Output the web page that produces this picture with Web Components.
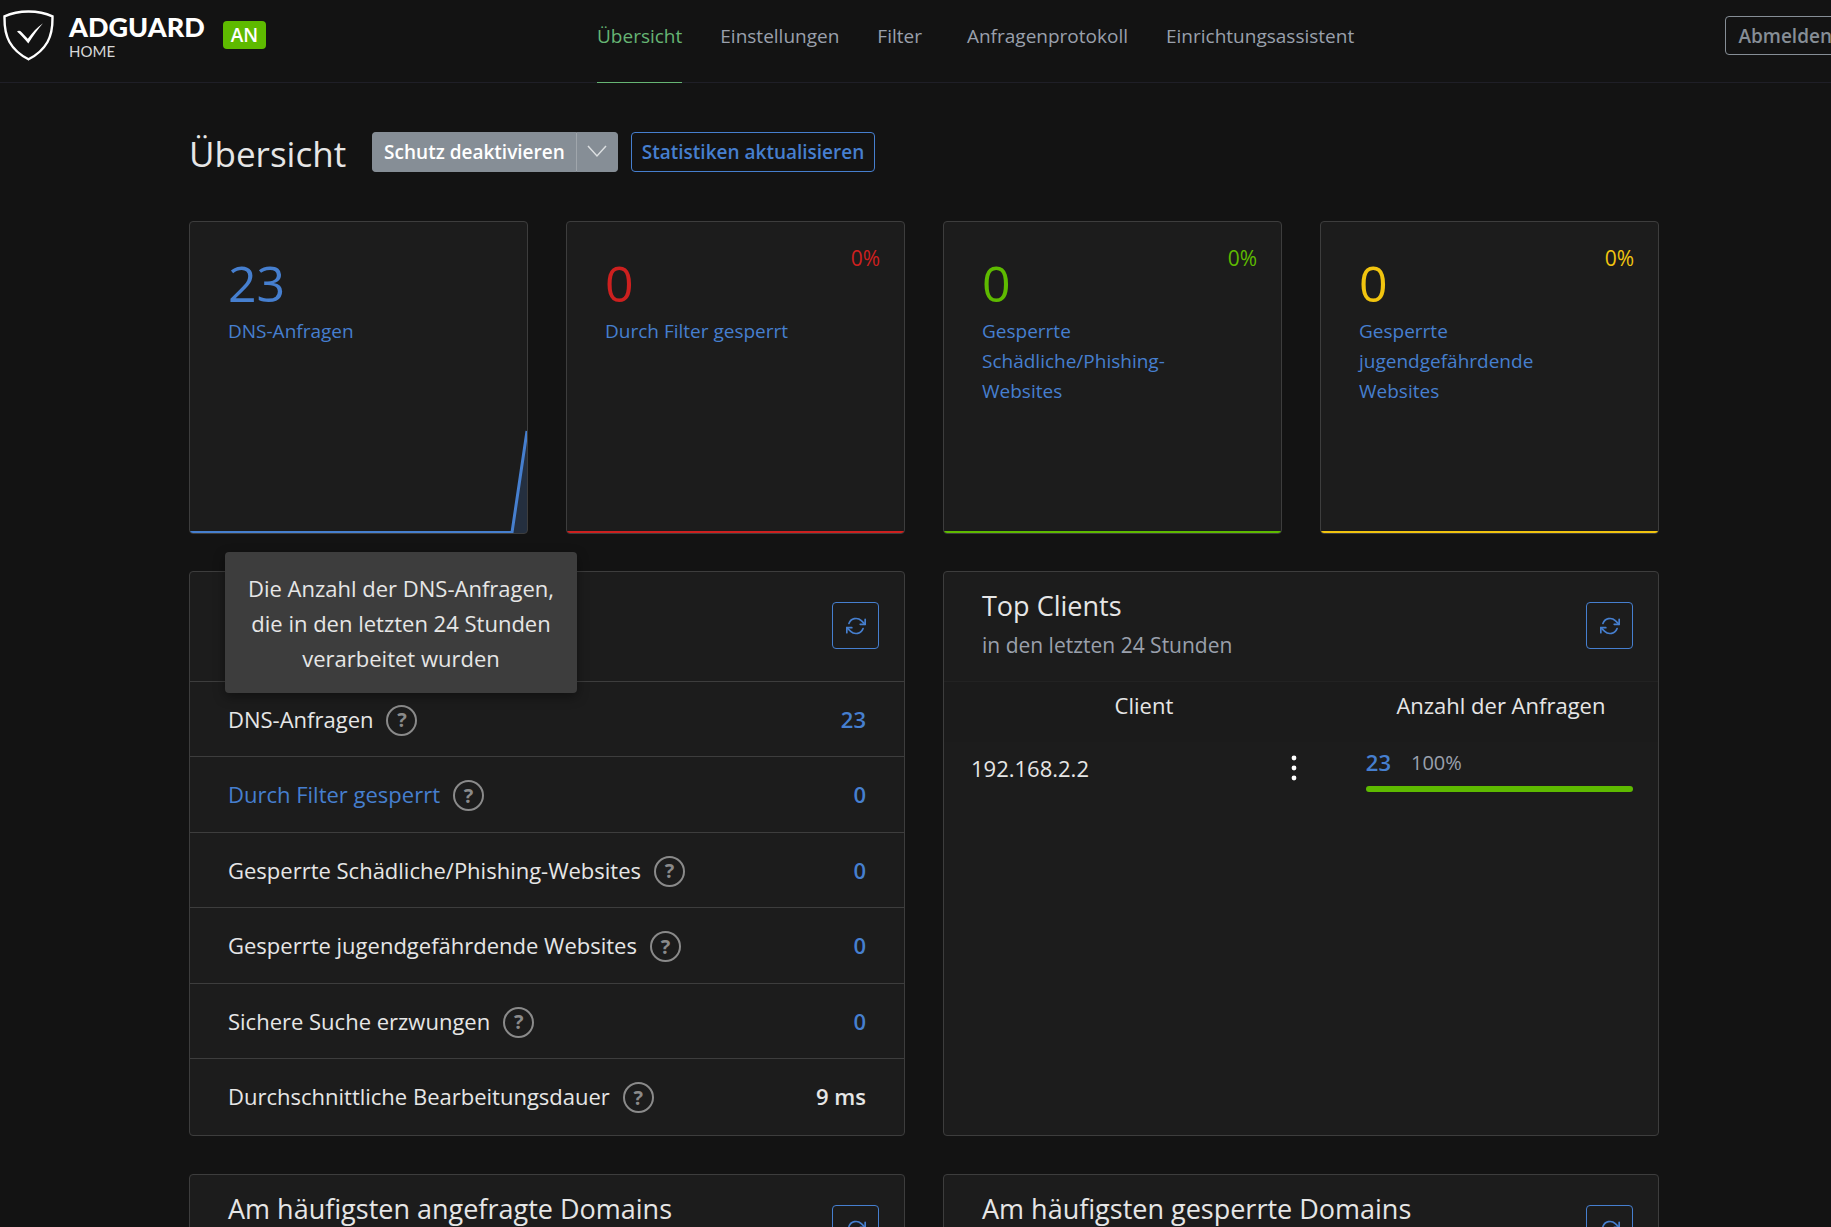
<!DOCTYPE html>
<html lang="de">
<head>
<meta charset="utf-8">
<title>AdGuard Home</title>
<style>
	:root {
		--bg: #131313;
		--card: #1c1c1c;
		--line: #3d3d3d;
		--text: #e6e6e6;
		--muted: #9aa0ac;
		--gray: #868e96;
		--blue: #467fcf;
		--red: #cd201f;
		--green: #5eba00;
		--yellow: #f1c40f;
	}
	html {
		overflow: hidden;
		background: var(--bg);
	}
	body {
		margin: 0;
		/* the header row is a scrollbar wider than the window */
		width: calc(100% + 17px);
		color: var(--text);
		font: 22px/35px "Open Sans", "Noto Sans", sans-serif;
	}
</style>
</head>
<body>
<doon-header></doon-header>
<doon-dashboard></doon-dashboard>

<script>
const BASE = `
	:host, *, *::before, *::after { box-sizing: border-box; }
	a { color: var(--blue); text-decoration: none; }
	button { margin: 0; font: inherit; cursor: pointer; }
`;

function createTemplate(html) {
	const template = document.createElement("template");
	template.innerHTML = html;
	return template;
}

class BaseElement extends HTMLElement {
	constructor(template) {
		super();
		this._shadow = this.attachShadow({ mode: "open" });
		this._shadow.appendChild(template.content.cloneNode(true));
	}
}

////////////////////////////////////////////// Header //////////////////////////////////////////////

const headerTemplate = createTemplate(`
<style>
	${BASE}
	:host {
		display: grid;
		grid-template-columns: minmax(280px, 597px) 1fr auto;
		height: 83px;
		padding-right: 3px;
		border-bottom: 1px solid #1f1f27;
	}
	.brand {
		display: flex;
		align-items: flex-start;
		padding: 10px 0 0 3px;
	}
	.brand svg { display: block; margin-right: 15px; }
	.name {
		display: flex;
		flex-direction: column;
		font-family: Lato, sans-serif;
		color: #fff;
	}
	.name b { font-size: 27px; line-height: 34px; font-weight: 900; }
	.name span { font-size: 15px; line-height: 14px; color: #d8d8d8; }
	.badge {
		margin: 11px 0 0 18px;
		padding: 0 8px;
		border-radius: 4px;
		background: var(--green);
		color: #fff;
		font-size: 19px;
		font-weight: 600;
		line-height: 28px;
	}
	nav { display: flex; gap: 38px; font-size: 19px; }
	/* room for the submenu caret */
	.has-menu { margin-right: 7px; }
	.logout {
		align-self: start;
		margin-top: 16px;
		height: 39px;
		padding: 0 12px;
		border: 1px solid var(--gray);
		border-radius: 4px;
		background: none;
		color: var(--gray);
		font-size: 19px;
		font-weight: 600;
		line-height: 36px;
	}
</style>
<div class="brand">
	<svg width="51" height="51" viewBox="0 0 51 51" fill="none">
		<path d="M25.500 1.500C17.500 1.500 8.500 3.100 1.500 6.300C1.500 12 0.900 22 6.500 32C11 40 18 45.500 25.500 49.300C33 45.500 40 40 44.500 32C50.100 22 49.500 12 49.500 6.300C42.500 3.100 33.500 1.500 25.500 1.500Z" stroke="#fff" stroke-width="2.400"/>
		<path d="M14 21.500C15.500 20.300 17.200 20.600 18.400 22L24.800 28.800C29.500 22.500 34.300 17 40 13.200C35 19 30 26 25.300 33.500C21.700 29.200 18 25 14 21.500Z" fill="#fff"/>
	</svg>
	<div class="name"><b>ADGUARD</b><span>HOME</span></div>
	<span class="badge">AN</span>
</div>
<nav>
	<doon-nav-link href="#" active>Übersicht</doon-nav-link>
	<doon-nav-link href="#settings">Einstellungen</doon-nav-link>
	<doon-nav-link href="#filters" class="has-menu">Filter</doon-nav-link>
	<doon-nav-link href="#logs">Anfragenprotokoll</doon-nav-link>
	<doon-nav-link href="#guide">Einrichtungsassistent</doon-nav-link>
</nav>
<button class="logout">Abmelden</button>
`);

customElements.define("doon-header", class extends BaseElement {
	constructor() { super(headerTemplate); }
});

const navLinkTemplate = createTemplate(`
<style>
	${BASE}
	:host { display: block; height: 83px; }
	a {
		display: block;
		height: 83px;
		padding-top: 19px;
		border-bottom: 1px solid transparent;
		color: var(--muted);
	}
	:host([active]) a { color: #66b574; border-color: #66b574; }
</style>
<a><slot></slot></a>
`);

customElements.define("doon-nav-link", class extends BaseElement {
	constructor() { super(navLinkTemplate); }

	connectedCallback() {
		this._shadow.querySelector("a").href = this.getAttribute("href");
	}
});

///////////////////////////////////////////// Stat card ////////////////////////////////////////////

const statCardTemplate = createTemplate(`
<style>
	${BASE}
	:host {
		display: flex;
		flex-direction: column;
		justify-content: space-between;
		min-height: 313px;
		border: 1px solid var(--line);
		border-radius: 4px;
		background: var(--card);
		overflow: hidden;
		color: var(--tone);
	}
	.top {
		display: grid;
		grid-template-columns: 1fr auto;
		padding: 19px 24px 0 38px;
	}
	.value { padding-top: 16px; font-size: 50px; line-height: 52px; }
	.percent { font-size: 21px; }
	.label {
		grid-column: 1 / 3;
		padding: 7px 50px 0 0;
		font-size: 19px;
		line-height: 30px;
	}
	svg { display: block; width: 100%; height: 104px; }
	path { vector-effect: non-scaling-stroke; }
	.area { fill: var(--tone); opacity: 0.2; }
	.curve { fill: none; stroke: var(--tone); stroke-width: 3; }
</style>
<div class="top">
	<div class="value"></div>
	<div class="percent"></div>
	<div class="label"><a href="#logs"><slot></slot></a></div>
</div>
<svg viewBox="0 0 337 104" preserveAspectRatio="none" aria-hidden="true">
	<path class="area"/>
	<path class="curve"/>
</svg>
`);

customElements.define("doon-stat-card", class extends BaseElement {
	constructor() { super(statCardTemplate); }

	connectedCallback() {
		this._shadow.querySelector(".value").textContent = this.getAttribute("value");
		this._shadow.querySelector(".percent").textContent = this.getAttribute("percent");
		this.style.setProperty("--tone", `var(--${this.getAttribute("tone")})`);
		this._drawChart(this.getAttribute("value") > 0);
	}

	// 24 hours, only the last one can hold data
	_drawChart(hasData) {
		const curve = hasData ? "M0 103.5H322L337 2" : "M0 103.5H337";
		this._shadow.querySelector(".curve").setAttribute("d", curve);
		this._shadow.querySelector(".area").setAttribute("d", hasData ? "M322 104L337 2V104Z" : "");
	}
});

/////////////////////////////////////////////// Panel //////////////////////////////////////////////

const panelTemplate = createTemplate(`
<style>
	${BASE}
	:host {
		display: flex;
		flex-direction: column;
		position: relative;
		min-height: 565px;
		border: 1px solid var(--line);
		border-radius: 4px;
		background: var(--card);
	}
	header {
		display: flex;
		align-items: center;
		justify-content: space-between;
		height: 109px;
		padding: 0 25px 2px 38px;
	}
	h2 { margin: 0 0 6px; font-size: 27px; line-height: 36px; font-weight: 400; }
	p { margin: 0; padding-bottom: 4px; font-size: 21px; line-height: 30px; color: var(--muted); }
	/* an open tooltip takes the place of the heading */
	:host([covered]) .heading { visibility: hidden; }
	button {
		display: flex;
		align-items: center;
		justify-content: center;
		width: 47px;
		height: 47px;
		padding: 0;
		border: 1px solid var(--blue);
		border-radius: 4px;
		background: none;
		color: var(--blue);
	}
</style>
<header>
	<div class="heading">
		<h2></h2>
		<p>in den letzten 24 Stunden</p>
	</div>
	<button aria-label="Aktualisieren">
		<svg width="20" height="20" viewBox="0 0 24 24" fill="none" stroke="currentColor" stroke-width="2" stroke-linecap="round" stroke-linejoin="round">
			<path d="M23 4v6h-6M1 20v-6h6"/>
			<path d="M3.510 9a9 9 0 0 1 14.850-3.360L23 10M1 14l4.640 4.360A9 9 0 0 0 20.490 15"/>
		</svg>
	</button>
</header>
<slot></slot>
`);

customElements.define("doon-panel", class extends BaseElement {
	constructor() { super(panelTemplate); }

	connectedCallback() {
		this._shadow.querySelector("h2").textContent = this.getAttribute("heading");
	}
});

////////////////////////////////////////////// Counters ////////////////////////////////////////////

const helpTemplate = createTemplate(`
<style>
	${BASE}
	:host { display: inline-flex; }
	button {
		width: 31px;
		height: 31px;
		padding: 0;
		border: 2px solid #8a8a8a;
		border-radius: 50%;
		background: none;
		color: #8a8a8a;
		font-size: 20px;
		font-weight: 700;
		line-height: 26px;
	}
</style>
<button>?</button>
`);

customElements.define("doon-help", class extends BaseElement {
	constructor() { super(helpTemplate); }
});

const countersTemplate = createTemplate(`
<style>
	${BASE}
	:host { display: block; }
	table { width: 100%; border-spacing: 0; }
	th, td { height: 75px; padding: 0 38px; border-top: 1px solid var(--line); }
	tr:nth-child(even) > * { height: 76px; }
	th { text-align: left; font-weight: 400; }
	th div { display: flex; align-items: center; gap: 13px; }
	doon-help { padding-top: 2px; }
	td { text-align: right; font-weight: 600; }
</style>
<table><tbody></tbody></table>
`);

customElements.define("doon-counters", class extends BaseElement {
	constructor() { super(countersTemplate); }

	connectedCallback() {
		const rows = [
			["DNS-Anfragen", `<a href="#logs">23</a>`],
			[`<a href="#logs">Durch Filter gesperrt</a>`, `<a href="#logs">0</a>`],
			["Gesperrte Schädliche/Phishing-Websites", `<a href="#logs">0</a>`],
			["Gesperrte jugendgefährdende Websites", `<a href="#logs">0</a>`],
			["Sichere Suche erzwungen", `<a href="#logs">0</a>`],
			["Durchschnittliche Bearbeitungsdauer", "9 ms"],
		];
		this._shadow.querySelector("tbody").innerHTML = rows.map(([label, value]) => `
			<tr>
				<th scope="row"><div><span>${label}</span><doon-help></doon-help></div></th>
				<td>${value}</td>
			</tr>
		`).join("");
	}
});

const tooltipTemplate = createTemplate(`
<style>
	${BASE}
	:host {
		display: block;
		position: absolute;
		top: -20px;
		left: 35px;
		width: 352px;
		padding: 19px 16px 17px;
		border-radius: 4px;
		background: var(--line);
		box-shadow: 0 4px 12px rgba(0, 0, 0, 0.4);
		text-align: center;
	}
</style>
<slot></slot>
`);

customElements.define("doon-tooltip", class extends BaseElement {
	constructor() { super(tooltipTemplate); }
});

////////////////////////////////////////////// Clients /////////////////////////////////////////////

const clientsTemplate = createTemplate(`
<style>
	${BASE}
	:host { display: block; }
	table { width: 100%; border-spacing: 0; table-layout: fixed; }
	thead { background: #1b1b1b; }
	th { height: 61px; padding: 0 0 14px; border-top: 1px solid #222; font-weight: 400; }
	th:first-child { width: 56%; }
	td { height: 67px; padding: 3px 25px 0 22px; vertical-align: top; }
	.client { display: flex; align-items: center; justify-content: space-between; padding: 5px 7px 0 5px; }
	.client button {
		display: flex;
		padding: 0;
		border: 0;
		background: none;
		color: #fff;
	}
	.count { display: flex; align-items: center; gap: 20px; height: 35px; }
	.count a { font-weight: 600; }
	.count span { font-size: 20px; color: var(--muted); }
	.bar { height: 6px; margin-top: 6px; border-radius: 3px; background: var(--green); }
</style>
<table>
	<thead>
		<tr><th>Client</th><th>Anzahl der Anfragen</th></tr>
	</thead>
	<tbody>
		<tr>
			<td>
				<div class="client">
					<span>192.168.2.2</span>
					<button aria-label="Menü">
						<svg width="36" height="36" viewBox="0 0 36 36" fill="currentColor">
							<circle cx="18" cy="8" r="2.400"/><circle cx="18" cy="18" r="2.400"/><circle cx="18" cy="28" r="2.400"/>
						</svg>
					</button>
				</div>
			</td>
			<td>
				<div class="count"><a href="#logs">23</a><span>100%</span></div>
				<div class="bar"></div>
			</td>
		</tr>
	</tbody>
</table>
`);

customElements.define("doon-clients", class extends BaseElement {
	constructor() { super(clientsTemplate); }
});

///////////////////////////////////////////// Dashboard ////////////////////////////////////////////

const dashboardTemplate = createTemplate(`
<style>
	${BASE}
	:host {
		display: block;
		max-width: 1470px;
		margin: 0 auto;
		padding-top: 49px;
	}
	.title { display: flex; align-items: center; gap: 13px; height: 40px; margin-bottom: 49px; }
	h1 { margin: 0 13px 0 0; padding-top: 4px; font-size: 35px; line-height: 44px; font-weight: 400; }
	.title button {
		height: 40px;
		padding: 0 10px;
		border: 1px solid var(--blue);
		border-radius: 4px;
		background: none;
		color: var(--blue);
		font-size: 19px;
		font-weight: 600;
		line-height: 36px;
	}
	.split { display: flex; }
	.split button { border-color: var(--gray); background: var(--gray); color: #fff; }
	.split button:first-child { padding: 0 11px; border-right: 0; border-radius: 4px 0 0 4px; }
	.split button:last-child {
		display: flex;
		align-items: center;
		border-left-color: #a0a6ac;
		border-radius: 0 4px 4px 0;
	}
	.cards { display: grid; grid-template-columns: repeat(4, 1fr); gap: 38px; margin-bottom: 37px; }
	.panels { display: grid; grid-template-columns: repeat(2, 1fr); gap: 38px; }
</style>
<div class="title">
	<h1>Übersicht</h1>
	<div class="split">
		<button>Schutz deaktivieren</button>
		<button aria-label="Dauer wählen">
			<svg width="20" height="20" viewBox="0 0 20 20" fill="none" stroke="#dcdfe1" stroke-width="1.500">
				<path d="M1 4L10 14L19 4"/>
			</svg>
		</button>
	</div>
	<button>Statistiken aktualisieren</button>
</div>
<div class="cards">
	<doon-stat-card value="23" tone="blue">DNS-Anfragen</doon-stat-card>
	<doon-stat-card value="0" percent="0%" tone="red">Durch Filter gesperrt</doon-stat-card>
	<doon-stat-card value="0" percent="0%" tone="green">Gesperrte Schädliche/Phishing-Websites</doon-stat-card>
	<doon-stat-card value="0" percent="0%" tone="yellow">Gesperrte jugendgefährdende Websites</doon-stat-card>
</div>
<div class="panels">
	<doon-panel heading="Allgemeine Statistiken" covered>
		<doon-counters></doon-counters>
		<doon-tooltip role="tooltip">Die Anzahl der DNS-Anfragen, die in den letzten 24 Stunden verarbeitet wurden</doon-tooltip>
	</doon-panel>
	<doon-panel heading="Top Clients">
		<doon-clients></doon-clients>
	</doon-panel>
	<doon-panel heading="Am häufigsten angefragte Domains"></doon-panel>
	<doon-panel heading="Am häufigsten gesperrte Domains"></doon-panel>
</div>
`);

customElements.define("doon-dashboard", class extends BaseElement {
	constructor() { super(dashboardTemplate); }
});
</script>
</body>
</html>
